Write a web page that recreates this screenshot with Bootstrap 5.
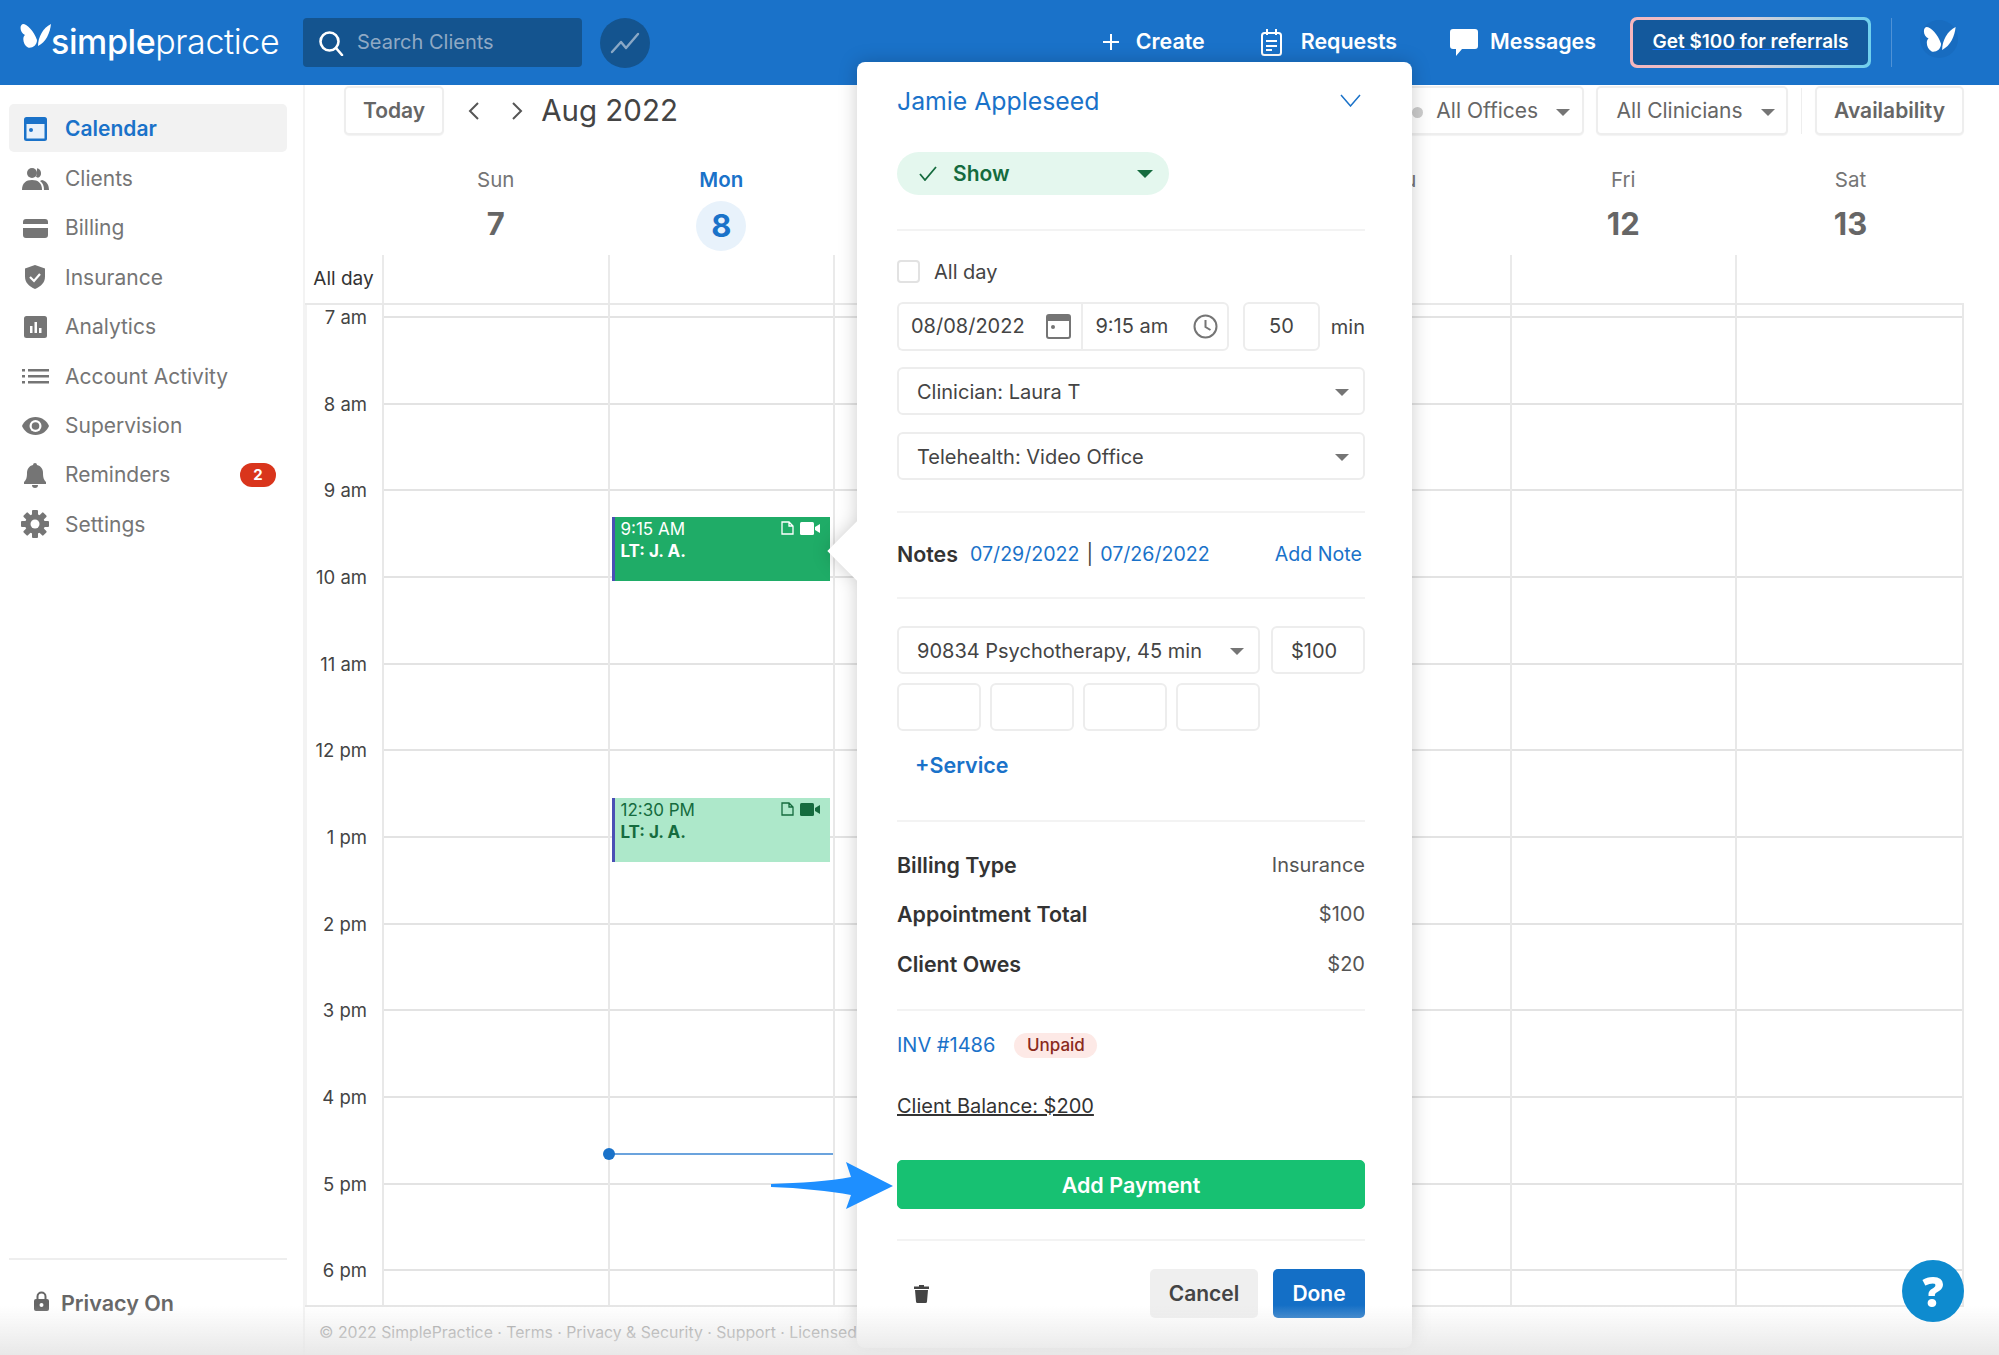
<!DOCTYPE html>
<html lang="en"><head><meta charset="utf-8"><title>SimplePractice Calendar</title>
<link href="https://cdn.jsdelivr.net/npm/bootstrap@5.3.0/dist/css/bootstrap.min.css" rel="stylesheet">
<style>
html,body{height:1355px;overflow:hidden}
body{font-family:Inter,"Liberation Sans",sans-serif;font-size:20px;color:#444;background:#fff}
.shell{width:1999px;height:1355px}
.topbar{height:85px;background:#1a72c9;padding:0 41px 0 20px;flex-wrap:nowrap}
.brand{width:283px;color:#fff;font-size:34px;line-height:1;letter-spacing:-.4px}
.brand b{font-weight:500}.brand i{font-style:normal;font-weight:300}
.brand svg{margin-right:0;margin-top:-14px;flex:none}
.brand span{padding-bottom:2px}
.searchbox{width:279px;height:49px;background:#14548f;border-radius:4px;padding:0 15px;color:#8fa9c4;font-size:20px;gap:13px}
.searchbox span{padding-bottom:2px}
.chartdot{width:50px;height:50px;background:#14548f;margin-left:18px}
.topact{color:#fff;font-weight:600;font-size:21.4px;text-decoration:none}
.topact span{padding-bottom:2px}
.a-create{gap:17px}.a-req{gap:19px;margin-left:56px}.a-msg{gap:12px;margin-left:53px}
.refer{width:241px;height:51px;margin-left:34px;padding:3px;border-radius:7px;background:linear-gradient(90deg,#f6b6bd,#d8cfd8 50%,#6fd0ee)}
.refer span{background:#14599c;border-radius:5px;color:#fff;font-size:19px;font-weight:600}
.vsep{width:1px;height:49px;background:#4f92d6;margin:0 28px 0 20px}
.avat{width:38px;height:38px;margin-top:-7px;background:#186cc0}
.sidebar{width:305px;border-right:2px solid #f3f3f3;padding:19px 16px 0 9px}
.sideitem{height:49.4px;color:#757575;font-size:21px;padding:0;text-decoration:none}
.sideitem .ico{width:52px;margin-right:4px;flex:none;justify-content:center}
.sideitem.act{background:#f2f2f2;border-radius:5px;color:#1a72c9;font-weight:600;height:48px;padding-top:1px;margin-bottom:2px}
.alert-pill{background:#d9351c;width:36px;height:24px;font-size:15px;line-height:24px;padding:0;margin-right:11px}
.sideend{border-top:2px solid #eee;margin-bottom:34px;padding-top:27px;padding-left:25px;gap:12px;font-weight:600;font-size:21.5px;color:#666;height:63px}
.calmain{width:1659px;margin-right:35px}
.tools{height:50px;padding-left:39px;margin-top:1px}
.toolbtn{height:49px;border:2px solid #eee;border-radius:5px;background:#fff;color:#666;font-size:21px;font-weight:600;padding:0 17px;box-shadow:0 1px 1px rgba(0,0,0,.05)}
.toolbtn.plain{font-weight:400;padding:0 11.5px 0 19px}
.toolbtn.plain::after{margin-left:18px;color:#757575;vertical-align:.1em;border-top-width:7px;border-left-width:7px;border-right-width:7px;border-bottom:0}
.toolbtn.officebtn{padding-left:17px}
.graydot{display:inline-block;width:11px;height:11px;border-radius:50%;background:#ccc;margin-right:13px}
.monthlab{font-size:29.5px;color:#444;line-height:1;margin-left:18px}
.nextbtn{margin-left:31px}.prevbtn{margin-left:24px}
.t-sep{width:1px;height:46px;background:#eee;margin:0 13px}
.t-gap{margin-right:12px}
.grid8{display:grid;grid-template-columns:77px repeat(6,225.5px) 1fr}
.heads{height:119px}
.dayh{text-align:center;color:#757575;font-size:20.5px;padding-left:2px}
.dayh span{display:block;margin-top:29px;line-height:30px}
.dayh strong{display:block;margin-top:9px;font-size:31px;line-height:40px;font-weight:700;color:#666}
.dayh.today span{color:#1a72c9;font-weight:600}
.dayh.today strong{color:#1a72c9;width:50px;height:50px;line-height:50px;border-radius:50%;background:#e8f2fb;margin:6px auto 0}
.allrow{height:50px;border-bottom:2px solid #e8e8e8}
.allrow div{border-left:2px solid #eaeaea}
.allrow .lbl{border-left:0;color:#333;font-size:19px;line-height:48px;text-align:center;white-space:nowrap}
.gridbody{flex:1 1 0;min-height:0;overflow:hidden}
.gutter{border-left:2px solid #f3f3f3}
.hourlist{margin-top:-31px}
.hourlist div{height:86.67px;line-height:86.67px;text-align:right;padding-right:15px;font-size:18.5px;color:#444}
.daycol{position:relative;border-left:2px solid #e8e8e8;background-image:repeating-linear-gradient(to bottom,#e3e3e3 0,#e3e3e3 2px,transparent 2px,transparent 86.67px);background-position:0 11px;background-repeat:no-repeat}
.daycol.endcol{border-right:2px solid #e8e8e8}
.evt{position:absolute;left:2px;width:218px;height:64px;border-left:3px solid #4a4fb5;padding:1px 0 0 6px;font-size:17px;line-height:22px}
.evt b{font-weight:700;display:block}
.evt .evicons{position:absolute;right:10px;top:4px;gap:6px}
.evt-a{top:212px;background:#1fac67;color:#fff}
.evt-b{top:493px;background:#ade8ca;color:#156b3e}
.nowline{position:absolute;top:848px;left:0;right:0;height:2px;background:#6ba3dd}
.nowline::before{content:"";position:absolute;left:-7px;top:-5px;width:12px;height:12px;border-radius:50%;background:#1a72c9}
.copyline{height:50px;border-top:2px solid #e6e6e6;padding:14px 0 0 14px;font-size:15.8px;color:#999;white-space:nowrap;overflow:hidden}
.popcard{position:absolute;left:857px;top:62px;width:555px;height:1286px;padding:24px 47px 0 40px;background:#fff;border-radius:8px;filter:drop-shadow(0 0 9px rgba(0,0,0,.2));z-index:5}
.popcard::before{content:"";position:absolute;left:-21px;top:468px;width:42px;height:42px;background:#fff;transform:rotate(45deg)}
.hrow{height:2px;background:#f3f3f3}
.pname{height:30px;color:#1a72c9;font-size:24.8px;line-height:30px}
.pstatus{width:272px;height:43px;background:#e4f7ee;color:#156b3e;font-weight:600;font-size:21px;padding:0 16px 0 22px;margin-top:36px;gap:16px;border:0}
.pstatus::after{margin-left:auto;border-top-width:8px;border-left-width:8px;border-right-width:8px;border-bottom:0}
.m29{margin-top:29px}.m34{margin-top:34px}.m19{margin-top:19px}.m16{margin-top:16px}.m17{margin-top:17px}.m31{margin-top:31px}.m25{margin-top:25px}.m27{margin-top:27px}.m9{margin-top:9px}.m18{margin-top:18px}.m41{margin-top:41px}.m20{margin-top:20px}.m40{margin-top:40px}.m30{margin-top:30px}.m28{margin-top:28px}
.alldaychk{gap:14px;height:23px}
.alldaychk .form-check-input{width:23px;height:23px;margin:0;border:2px solid #e2e2e2;border-radius:4px}
.fld{height:49px;border:2px solid #ededed;border-radius:6px;color:#444;font-size:20px;padding:0 12px;background:#fff;line-height:45px}
.fld-date{width:185px;border-right:0;border-radius:6px 0 0 6px;padding:0 10px 0 12px}
.fld-time{width:148px;border-radius:0 6px 6px 0;padding:0 9px 0 12px}
.fld-dur{width:77px;margin-left:14px;text-align:center}
.minlab{margin-left:11px}
.pickbtn{height:48px;width:100%;border:2px solid #ededed;border-radius:6px;padding:2px 14px 0 18px;color:#444;font-size:20px;background:#fff}
.pickbtn::after{margin-left:auto;color:#757575;border-top-width:7px;border-left-width:7px;border-right-width:7px;border-bottom:0}
.svc{width:363px}
.fld-price{width:94px;padding:1px 0 0 18px;height:48px}
.fld-mini{width:84px;height:48px}
.minis{gap:9px}
.txtrow{height:30px;line-height:32px}
.lnk{color:#1a72c9;text-decoration:none}
.datelnk{font-size:19.6px}
.sep-lnk{margin:0 7px}
.addnote{font-size:19.6px;margin-right:3px}
.svcadd{color:#1a72c9;font-weight:600;font-size:21.5px;padding-left:18px;text-decoration:none;display:block}
.sumlab{font-weight:600;font-size:21.4px;color:#333}.sumval{color:#555}
.invrow{margin-top:19px}.balrow{margin-top:30px}
.unpaid{background:#fde9e6;color:#8a2a1c;font-size:17px;font-weight:500;height:25px;width:83px;margin-left:19px;padding:0;line-height:25px}
.bal{color:#333;text-decoration:underline}
.paybtn{height:49px;width:100%;background:#17c172;border-color:#17c172;color:#fff;font-weight:600;font-size:21.5px;border-radius:5px;padding:2px 0 0}
.cancelbtn{width:108px;height:49px;background:#efefef;color:#444;font-weight:600;font-size:21px;border:0;border-radius:5px}
.donebtn{width:92px;height:49px;margin-left:15px;background:#146fc6;color:#fff;font-weight:600;font-size:21px;border:0;border-radius:5px}
.trashbtn{margin-left:17px}
.helpbtn{position:absolute;left:1902px;top:1260px;width:62px;height:62px;background:#0e8bcf;color:#fff;font:800 42px/62px "Open Sans",sans-serif;text-align:center;z-index:7}
.pointer{position:absolute;left:0;top:0;z-index:6;pointer-events:none}
.fadefoot{position:absolute;left:0;right:0;bottom:0;height:50px;background:linear-gradient(rgba(230,230,230,0),rgba(230,230,230,.9));z-index:6;pointer-events:none}
</style></head>
<body>
<div class="shell position-relative d-flex flex-column">
<nav class="navbar topbar d-flex align-items-center justify-content-start">
  <div class="brand d-flex align-items-center">
    <svg width="31" height="24" viewBox="0 0 31 24"><path fill="#fff" d="M17 16C14 7 7 0 3 0-1 1 0 9 5 11 2 13 3 21 8 23.500c4 1 9-2 9-7.500Z"/><path fill="#fff" d="M18 22C18 13 23 4 31 0 30 9 26 18 18 22Z"/></svg>
    <span><b>simple</b><i>practice</i></span>
  </div>
  <div class="searchbox d-flex align-items-center">
    <svg width="26" height="26" viewBox="0 0 26 26" fill="none" stroke="#fff" stroke-width="2.6"><circle cx="11.500" cy="11.500" r="9"/><path d="M18 18l6 7" stroke-linecap="round"/></svg><span>Search Clients</span>
  </div>
  <div class="chartdot rounded-circle d-flex align-items-center justify-content-center">
    <svg width="30" height="22" viewBox="0 0 30 22" fill="none" stroke="#8aa8c6" stroke-width="2.400" stroke-linecap="round" stroke-linejoin="round"><path d="M2 20l9-10 5 6L28 2"/></svg>
  </div>
  <div class="d-flex align-items-center ms-auto">
    <a class="topact a-create d-flex align-items-center" href="#"><svg width="16" height="16" viewBox="0 0 16 16" stroke="#fff" stroke-width="2"><path d="M8 0v16M0 8h16"/></svg><span>Create</span></a>
    <a class="topact a-req d-flex align-items-center" href="#"><svg width="21" height="27" viewBox="0 0 21 27" fill="none" stroke="#fff" stroke-width="2"><rect x="1" y="4" width="19" height="22" rx="2.500"/><path d="M6 0v6M15 0v6M5 12h11M5 17h11M5 21h6"/></svg><span>Requests</span></a>
    <a class="topact a-msg d-flex align-items-center" href="#"><svg width="28" height="27" viewBox="0 0 28 27"><path fill="#fff" d="M3 0h22a3 3 0 0 1 3 3v14a3 3 0 0 1-3 3H12l-6 7v-7H3a3 3 0 0 1-3-3V3a3 3 0 0 1 3-3Z"/></svg><span>Messages</span></a>
    <a class="refer d-block" href="#"><span class="d-flex h-100 align-items-center justify-content-center">Get $100 for referrals</span></a>
    <div class="vsep"></div>
    <div class="avat rounded-circle d-flex justify-content-center align-items-center"><svg width="35" height="25" viewBox="0 0 31 24"><path fill="#fff" d="M17 16C14 7 7 0 3 0-1 1 0 9 5 11 2 13 3 21 8 23.500c4 1 9-2 9-7.500Z"/><path fill="#fff" d="M18 22C18 13 23 4 31 0 30 9 26 18 18 22Z"/></svg></div>
  </div>
</nav>
<div class="d-flex flex-grow-1" id="bodyrow">
<aside class="sidebar d-flex flex-column">
  <nav class="nav flex-column flex-grow-1">
    <a class="sideitem act d-flex align-items-center" href="#"><span class="ico d-flex"><svg width="23" height="24" viewBox="0 0 23 24"><rect width="23" height="24" rx="2.500" fill="#1a72c9"/><rect x="2.500" y="7" width="18" height="14.500" fill="#e8f1fa"/><circle cx="7" cy="13" r="2" fill="#1a72c9"/></svg></span>Calendar</a>
    <a class="sideitem d-flex align-items-center" href="#"><span class="ico d-flex"><svg width="27" height="22" viewBox="0 0 27 22" fill="#757575"><circle cx="10" cy="5" r="5"/><path d="M0 22c0-7 4-10 10-10s10 3 10 10Z"/><path d="M15 .3a5 5 0 0 1 1 9.500c-1-.3-1.500-.8-2-1 1-2 1-5.500 1-8.500ZM20 12c4 1 7 4 7 10h-5c0-4-1-7-4-9Z"/></svg></span>Clients</a>
    <a class="sideitem d-flex align-items-center" href="#"><span class="ico d-flex"><svg width="25" height="19" viewBox="0 0 25 19" fill="#757575"><path d="M3 0h19a3 3 0 0 1 3 3v2H0V3a3 3 0 0 1 3-3ZM0 9h25v7a3 3 0 0 1-3 3H3a3 3 0 0 1-3-3Z"/></svg></span>Billing</a>
    <a class="sideitem d-flex align-items-center" href="#"><span class="ico d-flex"><svg width="22" height="24" viewBox="0 0 22 24"><path fill="#757575" d="M11 0l10 3.500v8c0 6-4 10-10 12.500C5 21.500 1 17.500 1 11.500v-8Z"/><path d="M6 12l4 4 6-7" fill="none" stroke="#fff" stroke-width="2.200"/></svg></span>Insurance</a>
    <a class="sideitem d-flex align-items-center" href="#"><span class="ico d-flex"><svg width="23" height="22" viewBox="0 0 23 22"><rect width="23" height="22" rx="2.500" fill="#757575"/><path d="M6 10h2.500v7H6zM10.500 6H13v11h-2.500zM15 12h2.500v5H15z" fill="#fff"/></svg></span>Analytics</a>
    <a class="sideitem d-flex align-items-center" href="#"><span class="ico d-flex"><svg width="27" height="16" viewBox="0 0 27 16" fill="#757575"><path d="M0 1h3v2.500H0zM6 1h21v2.500H6zM0 7h3v2.500H0zM6 7h21v2.500H6zM0 13h3v2.500H0zM6 13h21v2.500H6z"/></svg></span>Account Activity</a>
    <a class="sideitem d-flex align-items-center" href="#"><span class="ico d-flex"><svg width="27" height="18" viewBox="0 0 27 18"><path fill="#757575" d="M13.500 0C20 0 25 4 27 9c-2 5-7 9-13.500 9S2 14 0 9C2 4 7 0 13.500 0Z"/><circle cx="13.500" cy="9" r="6" fill="#fff"/><circle cx="13.500" cy="9" r="3.800" fill="#757575"/></svg></span>Supervision</a>
    <a class="sideitem d-flex align-items-center" href="#"><span class="ico d-flex"><svg width="22" height="25" viewBox="0 0 22 25" fill="#757575"><path d="M11 0a2 2 0 0 1 2 2c4 1 6 4 6 8 0 5 1 7 3 9v2H0v-2c2-2 3-4 3-9 0-4 2-7 6-8a2 2 0 0 1 2-2Z"/><path d="M8 22h6a3 3 0 0 1-6 0Z"/></svg></span><span class="flex-grow-1">Reminders</span><span class="badge rounded-pill alert-pill">2</span></a>
    <a class="sideitem d-flex align-items-center" href="#"><span class="ico d-flex"><svg width="28" height="28" viewBox="-14 -14 28 28"><g fill="#757575"><circle r="10"/><rect x="-3" y="-14" width="6" height="6" rx="1"/><rect x="-3" y="8" width="6" height="6" rx="1"/><rect x="8" y="-3" width="6" height="6" rx="1"/><rect x="-14" y="-3" width="6" height="6" rx="1"/><rect x="-3" y="-14" width="6" height="6" rx="1" transform="rotate(45)"/><rect x="-3" y="-14" width="6" height="6" rx="1" transform="rotate(135)"/><rect x="-3" y="-14" width="6" height="6" rx="1" transform="rotate(225)"/><rect x="-3" y="-14" width="6" height="6" rx="1" transform="rotate(315)"/></g><circle r="4.500" fill="#fff"/></svg></span>Settings</a>
  </nav>
  <div class="sideend d-flex align-items-start"><svg class="mt-1" width="15" height="20" viewBox="0 0 15 20"><path d="M3.500 9V5.500a4 4 0 0 1 8 0V9" fill="none" stroke="#666" stroke-width="2"/><rect y="8" width="15" height="12" rx="2" fill="#666"/><circle cx="7.500" cy="14" r="2" fill="#fff"/></svg><span>Privacy On</span></div>
</aside>
<main class="calmain d-flex flex-column">
  <div class="tools d-flex align-items-start justify-content-between">
    <div class="d-flex align-items-center">
      <button class="btn toolbtn" type="button">Today</button>
      <svg class="prevbtn" width="12" height="20" viewBox="0 0 12 20" fill="none" stroke="#555" stroke-width="2"><path d="M10 2l-8 8 8 8"/></svg>
      <svg class="nextbtn" width="12" height="20" viewBox="0 0 12 20" fill="none" stroke="#555" stroke-width="2"><path d="M2 2l8 8-8 8"/></svg>
      <span class="monthlab">Aug 2022</span>
    </div>
    <div class="d-flex align-items-center">
      <button class="btn toolbtn plain officebtn dropdown-toggle t-gap" type="button"><span class="graydot"></span>All Offices</button>
      <button class="btn toolbtn plain dropdown-toggle" type="button">All Clinicians</button>
      <div class="t-sep"></div>
      <button class="btn toolbtn" type="button">Availability</button>
    </div>
  </div>
  <div class="grid8 heads">
    <div></div>
    <div class="dayh"><span>Sun</span><strong>7</strong></div>
    <div class="dayh today"><span>Mon</span><strong>8</strong></div>
    <div class="dayh"></div>
    <div class="dayh"></div>
    <div class="dayh"><span>Thu</span></div>
    <div class="dayh"><span>Fri</span><strong>12</strong></div>
    <div class="dayh"><span>Sat</span><strong>13</strong></div>
  </div>
  <div class="grid8 allrow">
    <div class="lbl">All day</div><div></div><div></div><div></div><div></div><div></div><div></div><div></div>
  </div>
  <div class="grid8 gridbody">
    <div class="gutter"><div class="hourlist">
      <div>7 am</div><div>8 am</div><div>9 am</div><div>10 am</div><div>11 am</div><div>12 pm</div><div>1 pm</div><div>2 pm</div><div>3 pm</div><div>4 pm</div><div>5 pm</div><div>6 pm</div>
    </div></div>
    <div class="daycol"></div>
    <div class="daycol">
      <div class="evt evt-a">9:15 AM<b>LT: J. A.</b>
        <div class="evicons d-flex align-items-center"><svg width="13" height="14" viewBox="0 0 13 14" fill="none" stroke="#fff" stroke-width="1.300"><path d="M1 1h7l4 4v8H1ZM8 1v4h4"/></svg><svg width="20" height="13" viewBox="0 0 20 13" fill="#fff"><rect width="14" height="13" rx="1.500"/><path d="M15 5l5-3v9l-5-3Z"/></svg></div></div>
      <div class="evt evt-b">12:30 PM<b>LT: J. A.</b>
        <div class="evicons d-flex align-items-center"><svg width="13" height="14" viewBox="0 0 13 14" fill="none" stroke="#156b3e" stroke-width="1.300"><path d="M1 1h7l4 4v8H1ZM8 1v4h4"/></svg><svg width="20" height="13" viewBox="0 0 20 13" fill="#156b3e"><rect width="14" height="13" rx="1.500"/><path d="M15 5l5-3v9l-5-3Z"/></svg></div></div>
      <div class="nowline"></div>
    </div>
    <div class="daycol"></div><div class="daycol"></div><div class="daycol"></div><div class="daycol"></div><div class="daycol endcol"></div>
  </div>
  <footer class="copyline">© 2022 SimplePractice · Terms · Privacy &amp; Security · Support · Licensed to SimplePractice</footer>
</main>
</div>

<section class="popcard">
  <div class="pname d-flex justify-content-between"><a class="lnk" href="#">Jamie Appleseed</a><svg class="me-1 mt-2" width="21" height="13" viewBox="0 0 21 13" fill="none" stroke="#1a72c9" stroke-width="1.500"><path d="M1 1l9.500 11L20 1"/></svg></div>
  <button class="btn dropdown-toggle pstatus rounded-pill d-flex align-items-center" type="button"><svg width="18" height="15" viewBox="0 0 18 15" fill="none" stroke="#156b3e" stroke-width="1.800"><path d="M1 8l5 6L17 1"/></svg>Show</button>
  <div class="hrow m34"></div>
  <div class="alldaychk d-flex align-items-center m29"><input class="form-check-input" type="checkbox" aria-label="All day"><span>All day</span></div>
  <div class="d-flex align-items-center m19">
    <div class="fld fld-date d-flex justify-content-between align-items-center"><span>08/08/2022</span><svg width="25" height="25" viewBox="0 0 25 25"><rect x="1" y="1" width="23" height="23" rx="2" fill="#fff" stroke="#757575" stroke-width="2"/><rect x="1" y="1" width="23" height="6" fill="#757575"/><circle cx="7" cy="13" r="2" fill="#757575"/></svg></div>
    <div class="fld fld-time d-flex justify-content-between align-items-center"><span>9:15 am</span><svg width="25" height="25" viewBox="0 0 25 25" fill="none" stroke="#757575" stroke-width="2"><circle cx="12.500" cy="12.500" r="11"/><path d="M12.500 6v7l5 3"/></svg></div>
    <div class="fld fld-dur">50</div>
    <span class="minlab">min</span>
  </div>
  <button class="btn dropdown-toggle pickbtn d-flex align-items-center m16" type="button">Clinician: Laura T</button>
  <button class="btn dropdown-toggle pickbtn d-flex align-items-center m17" type="button">Telehealth: Video Office</button>
  <div class="hrow m31"></div>
  <div class="txtrow d-flex m25"><strong class="sumlab">Notes</strong><a class="lnk datelnk ms-2 ps-1" href="#">07/29/2022</a><span class="sep-lnk">|</span><a class="lnk datelnk" href="#">07/26/2022</a><a class="lnk addnote ms-auto" href="#">Add Note</a></div>
  <div class="hrow m29"></div>
  <div class="d-flex justify-content-between m27">
    <button class="btn dropdown-toggle pickbtn svc d-flex align-items-center" type="button">90834 Psychotherapy, 45 min</button>
    <div class="fld fld-price">$100</div>
  </div>
  <div class="d-flex minis m9"><div class="fld fld-mini"></div><div class="fld fld-mini"></div><div class="fld fld-mini"></div><div class="fld fld-mini"></div></div>
  <a class="svcadd txtrow m18" href="#">+Service</a>
  <div class="hrow m41"></div>
  <div class="txtrow d-flex justify-content-between m27"><strong class="sumlab">Billing Type</strong><span class="sumval">Insurance</span></div>
  <div class="txtrow d-flex justify-content-between m19"><strong class="sumlab">Appointment Total</strong><span class="sumval">$100</span></div>
  <div class="txtrow d-flex justify-content-between m20"><strong class="sumlab">Client Owes</strong><span class="sumval">$20</span></div>
  <div class="hrow m31"></div>
  <div class="txtrow d-flex align-items-center invrow"><a class="lnk" href="#">INV #1486</a><span class="badge rounded-pill unpaid">Unpaid</span></div>
  <div class="txtrow balrow"><a class="bal" href="#">Client Balance: $200</a></div>
  <button class="btn paybtn d-block m40" type="button">Add Payment</button>
  <div class="hrow m30"></div>
  <div class="d-flex align-items-center m28">
    <svg class="trashbtn" width="15" height="18" viewBox="0 0 15 18" fill="#444"><path d="M5 0h5v1.500h5V4H0V1.500h5ZM1 5h13l-1 11.500a1.500 1.500 0 0 1-1.500 1.500h-8A1.500 1.500 0 0 1 2 16.500Z"/></svg>
    <button class="btn cancelbtn ms-auto" type="button">Cancel</button><button class="btn donebtn" type="button">Done</button>
  </div>
</section>
<svg class="pointer" width="1999" height="1355"><path fill="#1e8fff" d="M771 1184C800 1183 830 1181 851 1177L846 1162 893 1186 846 1209 851 1195C830 1191 800 1188 771 1187Z"/></svg>
<div class="helpbtn rounded-circle">?</div>
<div class="fadefoot"></div>
</div>
<script src="https://cdn.jsdelivr.net/npm/bootstrap@5.3.0/dist/js/bootstrap.bundle.min.js"></script>
</body></html>
